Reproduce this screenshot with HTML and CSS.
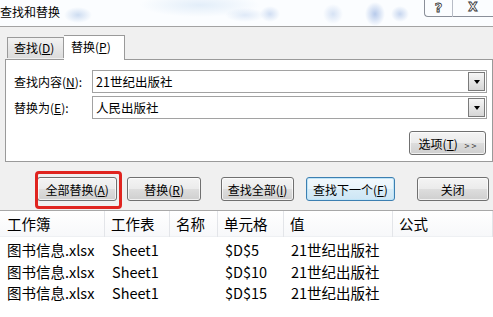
FILE: index.html
```html
<!DOCTYPE html>
<html lang="zh-CN">
<head>
    <meta charset="UTF-8">
    <title>查找和替换</title>
    <link rel="stylesheet" href="styles.css">
</head>
<body>
    <div class="titlebar">
        <span class="title">查找和替换</span>
        <div class="caption">
            <span class="cap help">?</span>
            <span class="cap close">X</span>
        </div>
    </div>

    <div class="dialog">
        <div class="tabs">
            <div class="tab">查找(<u>D</u>)</div>
            <div class="tab active">替换(<u>P</u>)</div>
        </div>

        <div class="panel">
            <div class="field">
                <label>查找内容(<u>N</u>):</label>
                <div class="combo">
                    <span class="value">21世纪出版社</span>
                    <span class="drop"></span>
                </div>
            </div>
            <div class="field">
                <label>替换为(<u>E</u>):</label>
                <div class="combo">
                    <span class="value">人民出版社</span>
                    <span class="drop"></span>
                </div>
            </div>
            <div class="options-row">
                <button class="btn options">选项(<u>T</u>) <span class="more">&gt; &gt;</span></button>
            </div>
        </div>

        <div class="actions">
            <button class="btn marked b1">全部替换(<u>A</u>)</button>
            <button class="btn b2">替换(<u>R</u>)</button>
            <button class="btn b3">查找全部(<u>I</u>)</button>
            <button class="btn focused b4">查找下一个(<u>F</u>)</button>
            <button class="btn b5">关闭</button>
        </div>
    </div>

    <div class="results">
        <div class="row head">
            <div class="cell">工作簿</div>
            <div class="cell">工作表</div>
            <div class="cell">名称</div>
            <div class="cell">单元格</div>
            <div class="cell">值</div>
            <div class="cell">公式</div>
        </div>
        <div class="row">
            <div class="cell">图书信息.xlsx</div>
            <div class="cell">Sheet1</div>
            <div class="cell"></div>
            <div class="cell">$D$5</div>
            <div class="cell">21世纪出版社</div>
            <div class="cell"></div>
        </div>
        <div class="row">
            <div class="cell">图书信息.xlsx</div>
            <div class="cell">Sheet1</div>
            <div class="cell"></div>
            <div class="cell">$D$10</div>
            <div class="cell">21世纪出版社</div>
            <div class="cell"></div>
        </div>
        <div class="row">
            <div class="cell">图书信息.xlsx</div>
            <div class="cell">Sheet1</div>
            <div class="cell"></div>
            <div class="cell">$D$15</div>
            <div class="cell">21世纪出版社</div>
            <div class="cell"></div>
        </div>
    </div>
</body>
</html>
```

FILE: styles.css
```css
body {
    margin: 0;
    width: 493px;
    height: 317px;
    overflow: hidden;
    background-color: #f0f0f0;
    font-family: "Noto Sans CJK SC", "Noto Sans", sans-serif;
    font-size: 12px;
    color: #000;
}

u {
    text-decoration: underline;
    text-underline-offset: 1px;
}

/* title bar with the blurred glass look */
.titlebar {
    height: 26px;
    border-bottom: 1px solid #a3a3a3;
    display: flex;
    justify-content: space-between;
    align-items: flex-start;
    background-color: #fbfdff;
    background-image:
        radial-gradient(ellipse 14px 8px at 78px 15px, rgba(120, 160, 215, 0.35), transparent),
        radial-gradient(ellipse 20px 7px at 245px 15px, rgba(140, 175, 225, 0.25), transparent),
        radial-gradient(ellipse 10px 8px at 270px 14px, rgba(130, 165, 220, 0.35), transparent),
        radial-gradient(ellipse 10px 10px at 333px 14px, rgba(130, 165, 220, 0.3), transparent),
        radial-gradient(ellipse 10px 12px at 375px 14px, rgba(100, 140, 210, 0.45), transparent),
        radial-gradient(ellipse 9px 8px at 400px 14px, rgba(120, 155, 215, 0.4), transparent),
        radial-gradient(ellipse 60px 12px at 200px 5px, rgba(190, 215, 240, 0.4), transparent);
}

.title {
    line-height: 24px;
    font-size: 12px;
}

.caption {
    display: flex;
}

.cap {
    height: 16px;
    line-height: 15px;
    text-align: center;
    color: #fff;
    -webkit-text-stroke: 0.8px #333;
    font-family: "DejaVu Sans", sans-serif;
    font-weight: bold;
    border-bottom: 1px solid #8a8f99;
}

.help {
    width: 27px;
    font-size: 13px;
    border-left: 1px solid #8a8f99;
    border-right: 1px solid #b7bcc6;
    border-bottom-left-radius: 4px;
}

.close {
    width: 40px;
    font-size: 12px;
}

.dialog {
    padding: 8px 4px 0 5px;
}

.tabs {
    display: flex;
    align-items: flex-end;
    height: 24px;
    margin-left: 2px;
    position: relative;
    z-index: 1;
}

.tab {
    height: 20px;
    line-height: 20px;
    padding: 0 7px 0 6px;
    width: 42px;
    background: linear-gradient(#f2f2f2, #dcdcdc);
    border: 1px solid #9a9a9a;
    border-bottom: none;
    margin-bottom: 1px;
}

.tab.active {
    height: 24px;
    line-height: 22px;
    width: 46px;
    background: #fff;
    margin-bottom: -1px;
    border-left: none;
    padding-left: 7px;
}

.panel {
    background: #fff;
    border: 1px solid #9a9a9a;
    width: 473px;
    padding: 10px 5px 6px 8px;
}

.field {
    display: flex;
    align-items: center;
    margin-bottom: 3px;
}

.field label {
    width: 78px;
}

.combo {
    flex: 1;
    height: 21px;
    border: 1px solid #a2a2a2;
    display: flex;
    justify-content: space-between;
    align-items: center;
    padding-left: 3px;
}

.combo .value {
    font-size: 12.5px;
}

.drop {
    width: 15px;
    height: 17px;
    margin-right: 1px;
    border: 1px solid #7a7a7a;
    background: linear-gradient(#f6f6f6, #d6d6d6);
    display: flex;
    align-items: center;
    justify-content: center;
}

.drop::before {
    content: "";
    border-left: 3.5px solid transparent;
    border-right: 3.5px solid transparent;
    border-top: 4px solid #000;
}

.options-row {
    display: flex;
    justify-content: flex-end;
    margin-top: 12px;
    padding-right: 1px;
}

.btn {
    font-family: inherit;
    font-size: 12px;
    color: #000;
    height: 25px;
    padding: 0;
    border: 1px solid #707070;
    border-radius: 3px;
    background: linear-gradient(#f4f4f4 0%, #ebebeb 50%, #dddddd 51%, #cfcfcf 100%);
    box-shadow: inset 0 0 0 1px rgba(255, 255, 255, 0.7);
}

.options {
    width: 77px;
    height: 24px;
}

.more {
    font-size: 9px;
    margin-left: 4px;
    color: #333;
}

.actions {
    display: flex;
    margin-top: 15px;
    padding-left: 32px;
}

.actions .btn {
    height: 24px;
}

.b1 { width: 81px; }
.b2 { width: 74px; margin-left: 10px; }
.b3 { width: 74px; margin-left: 20px; }
.b4 { width: 89px; margin-left: 12px; }
.b5 { width: 73px; margin-left: 22px; }

.focused {
    border-color: #3c7fb1;
    box-shadow: inset 0 0 0 1px #bfe4f7;
    background: linear-gradient(#f2f9fd 0%, #e8f4fb 50%, #d9ecf7 51%, #cde6f5 100%);
}

.marked {
    position: relative;
}

/* red highlight box drawn over the first button */
.marked::after {
    content: "";
    position: absolute;
    left: -3px;
    top: -7px;
    right: -6px;
    bottom: -9px;
    border: 3px solid #e0241f;
    border-radius: 4px;
}

.results {
    margin-top: 9px;
    background: #fff;
    border-top: 1px solid #a8a8a8;
    height: 120px;
    font-size: 14.5px;
}

.row {
    display: grid;
    grid-template-columns: 105px 65px 48px 66px 109px 1fr;
    height: 21.5px;
    line-height: 21.5px;
}

.row.head {
    height: 25px;
    line-height: 26px;
    margin-bottom: 2px;
    background: linear-gradient(#ffffff, #f7f8fa);
    border-bottom: 1px solid #eef0f3;
}

.cell {
    padding-left: 7px;
    white-space: nowrap;
}

.head .cell {
    border-right: 1px solid #e3e5e9;
    padding-left: 6px;
}

.head .cell:first-child {
    padding-left: 7px;
}
```
